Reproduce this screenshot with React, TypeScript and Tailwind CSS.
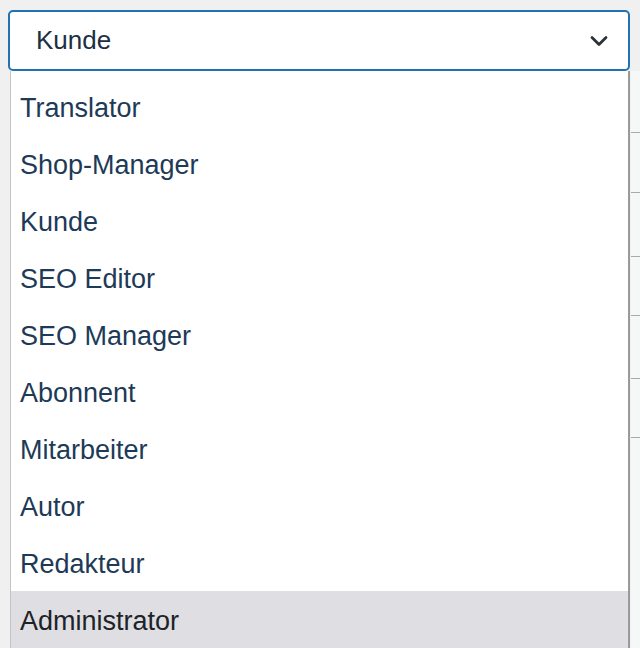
import { ChevronDown } from "lucide-react";

const roles = [
  "Translator",
  "Shop-Manager",
  "Kunde",
  "SEO Editor",
  "SEO Manager",
  "Abonnent",
  "Mitarbeiter",
  "Autor",
  "Redakteur",
  "Administrator",
];

export default function App() {
  return (
    <div
      className="h-[648px] w-[640px] overflow-hidden bg-[#f0f0f1]"
      style={{ fontFamily: '"Liberation Sans", Arial, sans-serif' }}
    >
      {/* Select */}
      <div className="pt-[10px] pl-[8px] pr-[10px]">
        <div className="flex h-[61px] items-center justify-between rounded-[5px] border-2 border-[#2271b1] bg-white pl-[26px] pr-[15px]">
          <span className="text-[26px] text-[#1d2f42]">Kunde</span>
          <ChevronDown className="h-[28px] w-[28px] text-[#2c3338]" strokeWidth={2.4} />
        </div>
      </div>

      {/* Options list + table behind */}
      <div className="flex">
        <div className="w-[10px] shrink-0" />
        <ul className="w-[618px] shrink-0 border-l border-[#c3c4c7] bg-white pt-[7px] shadow-[2px_0_0_#9a9a9a]">
          {roles.map((role) => (
            <li
              key={role}
              className={
                role === "Administrator"
                  ? "flex h-[57px] items-center bg-[#dedee3] pt-[4px] pl-[9px] text-[27px] text-[#1d2327]"
                  : "flex h-[57px] items-center pt-[4px] pl-[9px] text-[27px] text-[#1d3a57]"
              }
            >
              {role}
            </li>
          ))}
        </ul>
        <div className="ml-[3px] flex-1 bg-[#f6f7f7]">
          <div className="h-[62px] border-b border-[#a7aaad]" />
          <div className="h-[60px] border-b border-[#a7aaad]" />
          <div className="h-[64px] border-b border-[#a7aaad]" />
          <div className="h-[59px] border-b border-[#a7aaad]" />
          <div className="h-[63px] border-b border-[#a7aaad]" />
          <div className="h-[59px] border-b border-[#a7aaad]" />
        </div>
      </div>
    </div>
  );
}
